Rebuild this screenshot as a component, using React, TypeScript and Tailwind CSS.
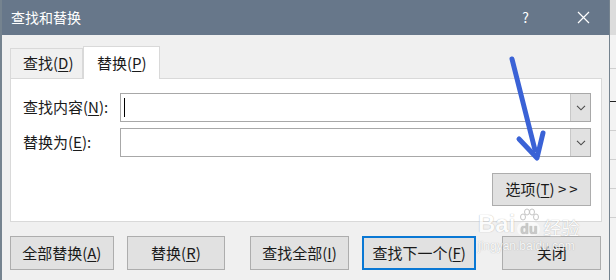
import React from 'react';

const U: React.FC<{ children: React.ReactNode }> = ({ children }) => (
  <span className="underline underline-offset-2 decoration-1">{children}</span>
);

const Chevron = () => (
  <svg width="10" height="6" viewBox="0 0 10 6" fill="none">
    <path d="M1 0.8 L5 4.8 L9 0.8" stroke="#4a4a4a" strokeWidth="1.1" />
  </svg>
);

const ComboInput: React.FC<{ caret?: boolean }> = ({ caret }) => (
  <div className="flex h-[29px] w-[471px] border border-[#a8a8a8] bg-white">
    <div className="flex flex-1 items-center pl-[3px]">
      {caret && <div className="h-[19px] w-px bg-black" />}
    </div>
    <div className="flex w-[20px] items-center justify-center border-l border-[#c8c8c8] bg-[#e1e1e1]">
      <Chevron />
    </div>
  </div>
);

const Btn: React.FC<{ className?: string; children: React.ReactNode; primary?: boolean }> = ({
  className = '',
  children,
  primary,
}) => (
  <div
    className={`flex items-center justify-center bg-[#e1e1e1] text-[15px] text-[#1a1a1a] ${
      primary ? 'border-2 border-[#0a78d4]' : 'border border-[#adadad]'
    } ${className}`}
  >
    {children}
  </div>
);

export default function App() {
  return (
    <div className="relative flex h-[280px] w-[616px] overflow-hidden bg-[#f0f0f0] font-['Noto_Sans_CJK_SC',sans-serif]">
      <div className="flex w-[610px] flex-col border-l-2 border-r border-[#75838f] bg-[#f0f0f0]">
        {/* title bar */}
        <div className="flex h-[35px] items-center bg-[#67778a] pl-[9px] text-[14px] text-white">
          <span>查找和替换</span>
          <span className="ml-auto mr-[48px] text-[14px]">?</span>
          <svg width="13" height="13" viewBox="0 0 13 13" className="mr-[19px]">
            <path d="M1 1 L12 12 M12 1 L1 12" stroke="white" strokeWidth="1.2" />
          </svg>
        </div>

        <div className="flex flex-col px-[8px]">
          {/* tabs */}
          <div className="mt-[11px] flex items-end">
            <div className="flex h-[30px] w-[73px] items-center border border-b-0 border-[#d9d9d9] pl-[12px] text-[15px] text-[#1a1a1a]">
              查找(<U>D</U>)
            </div>
            <div className="relative -mb-px flex h-[33px] w-[77px] items-center border border-b-0 border-[#d9d9d9] bg-white pl-[13px] text-[15px] text-[#1a1a1a]">
              替换(<U>P</U>)
            </div>
          </div>

          {/* panel */}
          <div className="flex w-[592px] flex-col border border-[#d9d9d9] bg-white pb-[15px] pl-[12px] pr-[10px] pt-[14px] text-[15px] text-[#1a1a1a]">
            <div className="flex items-center">
              <span className="w-[97px]">查找内容(<U>N</U>):</span>
              <ComboInput caret />
            </div>
            <div className="mt-[6px] flex items-center">
              <span className="w-[97px]">替换为(<U>E</U>):</span>
              <ComboInput />
            </div>
            <div className="mt-[16px] flex justify-end">
              <Btn className="h-[33px] w-[99px]">
                选项(<U>T</U>)&nbsp;&gt;&thinsp;&gt;
              </Btn>
            </div>
          </div>

          {/* bottom buttons */}
          <div className="mt-[14px] flex">
            <Btn className="h-[34px] w-[104px]">全部替换(<U>A</U>)</Btn>
            <Btn className="ml-[13px] h-[34px] w-[99px]">替换(<U>R</U>)</Btn>
            <Btn className="ml-[25px] h-[34px] w-[99px]">查找全部(<U>I</U>)</Btn>
            <Btn primary className="ml-[13px] h-[34px] w-[115px]">查找下一个(<U>F</U>)</Btn>
            <Btn className="ml-[26px] h-[34px] w-[99px]">关闭</Btn>
          </div>
        </div>
      </div>

      {/* spreadsheet behind */}
      <div className="flex flex-1 flex-col bg-[#f3f3f3]">
        <div className="h-[35px] bg-[#dcdcdc]" />
        <div className="mt-[33px] h-px bg-[#d0d0d0]" />
        <div className="mt-[32px] h-px bg-[#222]" />
        <div className="mt-[28px] h-px bg-[#d0d0d0]" />
        <div className="mt-[28px] h-px bg-[#d0d0d0]" />
        <div className="mt-[28px] h-px bg-[#d0d0d0]" />
        <div className="mt-[28px] h-px bg-[#d0d0d0]" />
      </div>

      {/* annotation arrow */}
      <svg className="pointer-events-none absolute left-0 top-0" width="616" height="280">
        <path d="M512 59 L535 150" stroke="#3a62d6" strokeWidth="5" strokeLinecap="round" />
        <path d="M519 139 L537 158 L543 133" stroke="#3a62d6" strokeWidth="5" strokeLinecap="round" strokeLinejoin="round" fill="none" />
      </svg>

      {/* watermark */}
      <div className="pointer-events-none absolute left-[478px] top-[208px] flex flex-col opacity-75">
        <div className="flex items-end font-['Liberation_Sans',sans-serif] text-[24px] font-bold leading-none text-white [text-shadow:0_0_1px_#8c8c8c]">
          <span>Bai</span>
          <span className="relative ml-[2px] flex flex-col items-center">
            <svg width="20" height="14" viewBox="0 0 20 14">
              <g fill="white" stroke="#a0a0a0" strokeWidth="0.8">
                <ellipse cx="4" cy="9" rx="2.5" ry="3" />
                <ellipse cx="8" cy="4" rx="2.5" ry="3" />
                <ellipse cx="13" cy="4" rx="2.5" ry="3" />
                <ellipse cx="17" cy="9" rx="2.5" ry="3" />
              </g>
            </svg>
            <span className="rounded-full bg-white/80 px-[3px] text-[14px] text-[#bdbdbd]">du</span>
          </span>
          <span className="ml-[3px] font-['Noto_Sans_CJK_SC',sans-serif] text-[18px] font-normal">经验</span>
        </div>
        <span className="mt-[4px] font-['Liberation_Sans',sans-serif] text-[12px] leading-none text-white [text-shadow:0_0_1px_#8c8c8c]">
          jingyan.baidu.com
        </span>
      </div>
    </div>
  );
}
